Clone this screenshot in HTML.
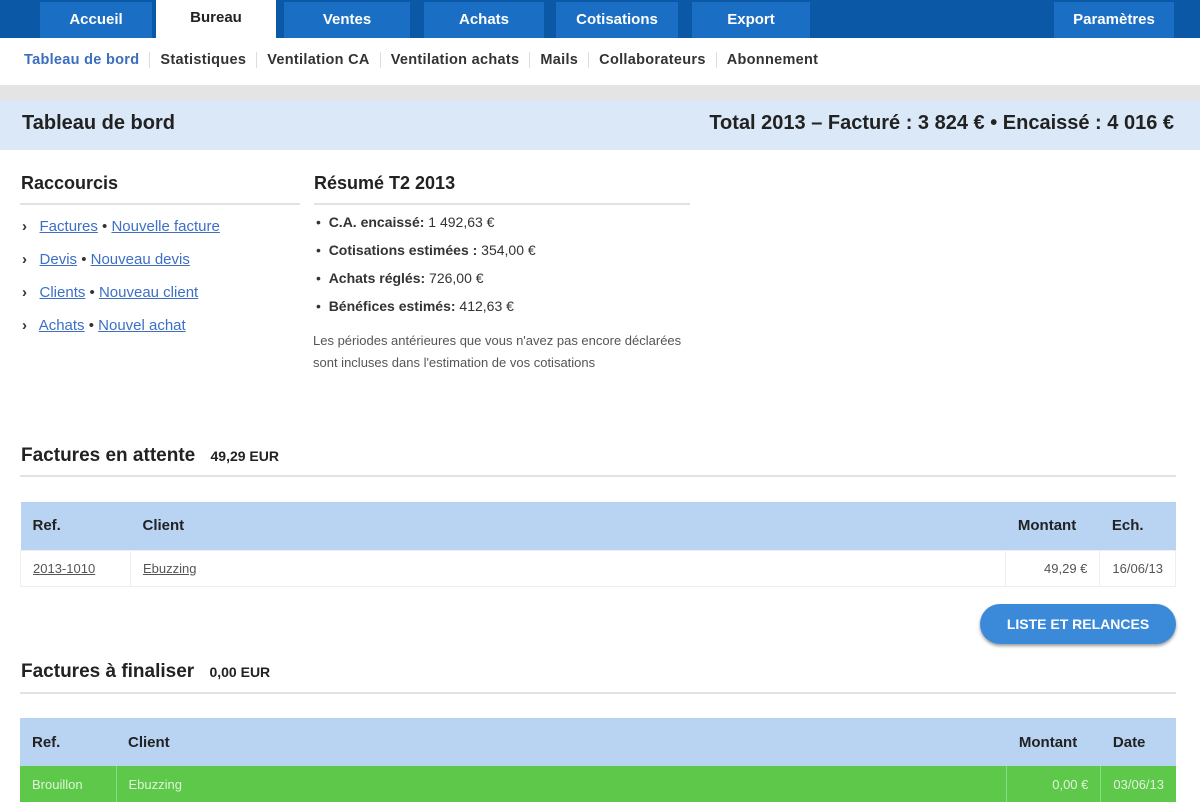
<!DOCTYPE html><html><head><meta charset="utf-8"><style>
body{margin:0;width:1200px;height:789px;overflow:hidden;font-family:"Liberation Sans",Arial,sans-serif;background:#fff;color:#222;position:relative}
.a{position:absolute}
.top{left:0;top:0;width:1200px;height:38px;background:#0b58a6}
.tab{top:2px;height:36px;background:#1a6fc4;color:#fff;font-weight:bold;font-size:15px;text-align:center;line-height:36px}
.tab.on{background:#fff;color:#222;top:0;height:38px}
.sub{top:52px;font-size:14.5px;font-weight:bold;color:#333;letter-spacing:0.3px}
.sub span{padding:0 10px;border-left:1px solid #ddd}
.sub span:first-child{border:none;color:#3a6ebf;padding-left:0}
h3{margin:0;font-size:19px;font-weight:bold;position:absolute}
a{color:#3d6fc6}
.li{font-size:15px;color:#333}
table{border-collapse:collapse;position:absolute;font-size:15px}
th{text-align:left;font-weight:bold;color:#222;padding:0 12px}
td{padding:0 12px;font-size:13px;color:#555}
</style></head><body>
<div class="a top"></div>
<div class="a tab" style="left:40px;width:112px">Accueil</div>
<div class="a tab on" style="left:156px;width:120px">Bureau</div>
<div class="a tab" style="left:284px;width:126px">Ventes</div>
<div class="a tab" style="left:424px;width:120px">Achats</div>
<div class="a tab" style="left:556px;width:122px">Cotisations</div>
<div class="a tab" style="left:692px;width:118px">Export</div>
<div class="a tab" style="left:1054px;width:120px">Paramètres</div>
<div class="a sub" style="left:24px"><span>Tableau de bord</span><span>Statistiques</span><span>Ventilation CA</span><span>Ventilation achats</span><span>Mails</span><span>Collaborateurs</span><span>Abonnement</span></div>
<div class="a" style="left:0;top:85px;width:1200px;height:15px;background:#e4e4e4"></div>
<div class="a" style="left:0;top:100px;width:1200px;height:50px;background:#dae8f7"></div>
<h3 style="left:22px;top:112px;font-size:20px">Tableau de bord</h3>
<h3 style="right:26px;top:112px;font-size:20px">Total 2013 – Facturé : 3 824 € • Encaissé : 4 016 €</h3>
<h3 style="left:21px;top:173px;font-size:18px">Raccourcis</h3>
<div class="a" style="left:20px;top:203px;width:280px;height:2px;background:#e2e2e2"></div>
<h3 style="left:314px;top:173px;font-size:18px">Résumé T2 2013</h3>
<div class="a" style="left:314px;top:203px;width:376px;height:2px;background:#e2e2e2"></div>
<div class="a li" style="left:22px;top:210px;line-height:33px">
<div><b>›</b>&nbsp;&nbsp; <a href="#">Factures</a> • <a href="#">Nouvelle facture</a></div>
<div><b>›</b>&nbsp;&nbsp; <a href="#">Devis</a> • <a href="#">Nouveau devis</a></div>
<div><b>›</b>&nbsp;&nbsp; <a href="#">Clients</a> • <a href="#">Nouveau client</a></div>
<div><b>›</b>&nbsp;&nbsp; <a href="#">Achats</a> • <a href="#">Nouvel achat</a></div></div>
<div class="a" style="left:316px;top:208px;font-size:14px;line-height:28px;color:#333">
<div>• &nbsp;<b>C.A. encaissé:</b> 1 492,63 €</div>
<div>• &nbsp;<b>Cotisations estimées :</b> 354,00 €</div>
<div>• &nbsp;<b>Achats réglés:</b> 726,00 €</div>
<div>• &nbsp;<b>Bénéfices estimés:</b> 412,63 €</div></div>
<div class="a" style="left:313px;top:330px;width:370px;font-size:13px;line-height:22px;color:#555">Les périodes antérieures que vous n'avez pas encore déclarées sont incluses dans l'estimation de vos cotisations</div>
<h3 style="left:21px;top:445px">Factures en attente <span style="font-size:14px;margin-left:10px">49,29 EUR</span></h3>
<div class="a" style="left:20px;top:475px;width:1156px;height:2px;background:#e2e2e2"></div>
<table style="left:20px;top:502px;width:1156px">
<tr style="background:#b8d4f2;height:48px"><th style="width:86px">Ref.</th><th>Client</th><th style="width:70px">Montant</th><th style="width:50px">Ech.</th></tr>
<tr style="height:36px;border:1px solid #eee"><td style="border-right:1px solid #eee;text-decoration:underline">2013-1010</td><td style="text-decoration:underline">Ebuzzing</td><td style="text-align:right;border-left:1px solid #eee">49,29 €</td><td style="border-left:1px solid #eee">16/06/13</td></tr></table>
<div class="a" style="left:980px;top:604px;width:196px;height:40px;border-radius:20px;background:#3b8ad9;color:#fff;font-size:14px;font-weight:bold;text-align:center;line-height:40px;box-shadow:0 2px 3px #999">LISTE ET RELANCES</div>
<h3 style="left:21px;top:661px">Factures à finaliser <span style="font-size:14px;margin-left:10px">0,00 EUR</span></h3>
<div class="a" style="left:20px;top:692px;width:1156px;height:2px;background:#e2e2e2"></div>
<table style="left:20px;top:718px;width:1156px">
<tr style="background:#b8d4f2;height:48px"><th style="width:72px">Ref.</th><th>Client</th><th style="width:70px">Montant</th><th style="width:50px">Date</th></tr>
<tr style="height:36px;background:#5ec84b"><td style="color:#dff5d8;border-right:1px solid #8d8">Brouillon</td><td style="color:#dff5d8">Ebuzzing</td><td style="text-align:right;color:#dff5d8;border-left:1px solid #8d8">0,00 €</td><td style="color:#dff5d8;border-left:1px solid #8d8">03/06/13</td></tr></table>
</body></html>
